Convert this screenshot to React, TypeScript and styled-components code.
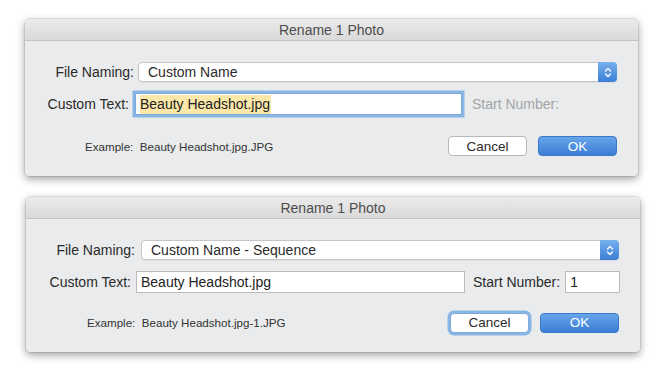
import React from "react";
import styled, { createGlobalStyle, css } from "styled-components";

const Global = createGlobalStyle`
  html, body { margin: 0; padding: 0; background: #ffffff; }
  body { font-family: "Liberation Sans", Arial, sans-serif; -webkit-font-smoothing: antialiased; }
`;

const Page = styled.div`
  width: 664px;
  height: 380px;
  display: flex;
  flex-direction: column;
  gap: 21px;
  padding-top: 19px;
  box-sizing: border-box;
`;

const Dialog = styled.div<{ $left: number; $width: number }>`
  margin-left: ${(p) => p.$left}px;
  width: ${(p) => p.$width}px;
  background: #e9ebec;
  border-radius: 4px;
  box-shadow: 0 0 0 1px rgba(0, 0, 0, 0.08), 0 3px 8px rgba(0, 0, 0, 0.38);
  overflow: hidden;
`;

const TitleBar = styled.div`
  height: 21px;
  display: flex;
  align-items: center;
  justify-content: center;
  background: linear-gradient(#ebebeb, #d9d9d9);
  border-bottom: 1px solid #c3c3c3;
  font-size: 14px;
  color: #4d4d4d;
`;

const Body = styled.div<{ $bottom: number }>`
  display: flex;
  flex-direction: column;
  padding: 21px 21px ${(p) => p.$bottom}px 0;
`;

const Row = styled.div<{ $mt?: number; $h: number }>`
  display: flex;
  align-items: center;
  height: ${(p) => p.$h}px;
  margin-top: ${(p) => p.$mt ?? 0}px;
`;

const Label = styled.span<{ $w: number; $gap: number }>`
  width: ${(p) => p.$w}px;
  flex: none;
  text-align: right;
  font-size: 14px;
  color: #2a2a2a;
  margin-right: ${(p) => p.$gap}px;
  white-space: nowrap;
`;

const InlineLabel = styled.span<{ $disabled?: boolean; $ml: number; $mr?: number }>`
  font-size: 14px;
  color: ${(p) => (p.$disabled ? "#a3a5a7" : "#2a2a2a")};
  margin-left: ${(p) => p.$ml}px;
  margin-right: ${(p) => p.$mr ?? 0}px;
  white-space: nowrap;
`;

const Select = styled.div`
  flex: 1;
  height: 20px;
  display: flex;
  align-items: stretch;
  background: #fff;
  border: 1px solid #c4c6c8;
  border-radius: 4px;
  box-sizing: border-box;
  box-shadow: 0 1px 1px rgba(0, 0, 0, 0.06);
`;

const SelectText = styled.span`
  flex: 1;
  padding-left: 9px;
  font-size: 14px;
  line-height: 18px;
  color: #2a2a2a;
`;

const Stepper = styled.span`
  width: 19px;
  margin: -1px -1px -1px 0;
  border-radius: 0 4px 4px 0;
  background: linear-gradient(#76b1ee, #3d7fd6);
  display: flex;
  align-items: center;
  justify-content: center;
`;

const Field = styled.div<{ $width: number; $focused?: boolean }>`
  width: ${(p) => p.$width}px;
  flex: none;
  height: 22px;
  box-sizing: border-box;
  background: #fff;
  border: 1px solid #b9bbbd;
  display: flex;
  align-items: center;
  padding-left: 4px;
  font-size: 14px;
  color: #222;
  ${(p) =>
    p.$focused &&
    css`
      border-color: #7ea9d8;
      box-shadow: 0 0 0 2.5px #8ab6e6;
    `}
`;

const Selected = styled.span`
  background: #fbe8a8;
  padding: 1px 1px 2px 0;
`;

const Example = styled.span<{ $pad: number }>`
  flex: 1;
  padding-left: ${(p) => p.$pad}px;
  font-size: 11.6px;
  color: #333;
`;

const Button = styled.button<{ $primary?: boolean; $focused?: boolean }>`
  width: 79px;
  height: 20px;
  margin-left: 11px;
  border-radius: 4px;
  font-family: "Liberation Sans", Arial, sans-serif;
  font-size: 13.5px;
  padding: 0;
  cursor: default;
  ${(p) =>
    p.$primary
      ? css`
          border: 1px solid #3a78c9;
          color: #fff;
          background: linear-gradient(#67a5ea, #3b7dd5);
        `
      : css`
          border: 1px solid #b6b8ba;
          color: #2a2a2a;
          background: #fff;
        `}
  ${(p) =>
    p.$focused &&
    css`
      border-color: #7ea9d8;
      box-shadow: 0 0 0 2.5px #8ab6e6;
    `}
`;

const Chevrons = () => (
  <svg width="8" height="11" viewBox="0 0 8 11">
    <path d="M1.5 4 L4 1.5 L6.5 4 M1.5 7 L4 9.5 L6.5 7" fill="none" stroke="#fff" strokeWidth="1.3" strokeLinecap="round" strokeLinejoin="round" />
  </svg>
);

export default function App() {
  return (
    <>
      <Global />
      <Page>
        <Dialog $left={25} $width={613}>
          <TitleBar>Rename 1 Photo</TitleBar>
          <Body $bottom={20}>
            <Row $h={20}>
              <Label $w={109} $gap={4}>File Naming:</Label>
              <Select>
                <SelectText>Custom Name</SelectText>
                <Stepper><Chevrons /></Stepper>
              </Select>
            </Row>
            <Row $h={22} $mt={11}>
              <Label $w={104} $gap={6}>Custom Text:</Label>
              <Field $width={327} $focused>
                <Selected>Beauty Headshot.jpg</Selected>
              </Field>
              <InlineLabel $disabled $ml={10}>Start Number:</InlineLabel>
            </Row>
            <Row $h={20} $mt={21}>
              <Example $pad={60}>Example:&nbsp; Beauty Headshot.jpg.JPG</Example>
              <Button>Cancel</Button>
              <Button $primary>OK</Button>
            </Row>
          </Body>
        </Dialog>
        <Dialog $left={26} $width={614}>
          <TitleBar>Rename 1 Photo</TitleBar>
          <Body $bottom={19}>
            <Row $h={20}>
              <Label $w={109} $gap={6}>File Naming:</Label>
              <Select>
                <SelectText>Custom Name - Sequence</SelectText>
                <Stepper><Chevrons /></Stepper>
              </Select>
            </Row>
            <Row $h={22} $mt={11}>
              <Label $w={105} $gap={5}>Custom Text:</Label>
              <Field $width={329}>Beauty Headshot.jpg</Field>
              <InlineLabel $ml={8} $mr={5}>Start Number:</InlineLabel>
              <Field $width={55}>1</Field>
            </Row>
            <Row $h={21} $mt={19}>
              <Example $pad={61}>Example:&nbsp; Beauty Headshot.jpg-1.JPG</Example>
              <Button $focused>Cancel</Button>
              <Button $primary>OK</Button>
            </Row>
          </Body>
        </Dialog>
      </Page>
    </>
  );
}
